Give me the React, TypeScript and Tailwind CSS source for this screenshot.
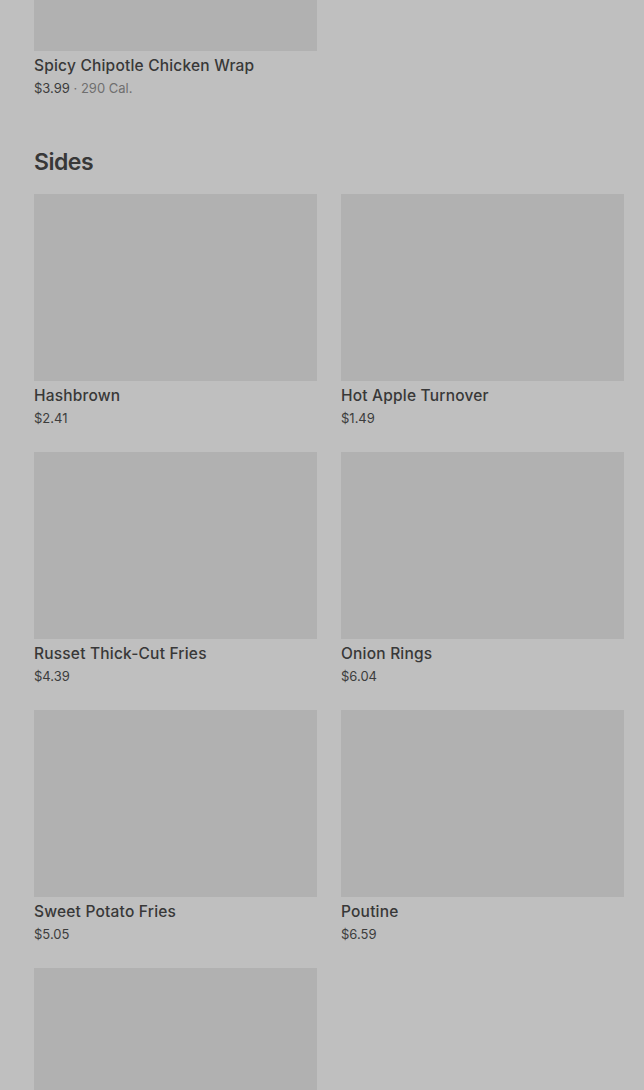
const sides = [
  { name: 'Hashbrown', price: '$2.41' },
  { name: 'Hot Apple Turnover', price: '$1.49' },
  { name: 'Russet Thick-Cut Fries', price: '$4.39' },
  { name: 'Onion Rings', price: '$6.04' },
  { name: 'Sweet Potato Fries', price: '$5.05' },
  { name: 'Poutine', price: '$6.59' },
  { name: '', price: '' },
]

type Item = { name: string; price: string; cal?: string }

function MenuCard({ item, imgClass = 'h-[187px]' }: { item: Item; imgClass?: string }) {
  return (
    <div className="flex flex-col">
      <div className={`w-full bg-[#b1b1b1] ${imgClass}`} />
      {item.name && (
        <>
          <div className="mt-[5px] text-[15.5px] leading-5 font-medium tracking-[0.2px] text-[#383838]">{item.name}</div>
          <div className="mt-[3px] text-[13px] leading-[18px] text-[#3c3c3c]">
            {item.price}
            {item.cal && <span className="text-[#6f6f6f]"> · {item.cal}</span>}
          </div>
        </>
      )}
    </div>
  )
}

export default function App() {
  return (
    <div
      className="h-[1090px] overflow-hidden bg-[#bfbfbf] pl-[34px] pr-[20px]"
      style={{ fontFamily: 'Inter, "Liberation Sans", sans-serif' }}
    >
      {/* previous section, scrolled off the top */}
      <div className="grid grid-cols-2 gap-x-6">
        <MenuCard item={{ name: 'Spicy Chipotle Chicken Wrap', price: '$3.99', cal: '290 Cal.' }} imgClass="h-[51px]" />
      </div>

      <h2 className="mt-[49px] text-[23px] leading-8 font-semibold tracking-[-0.5px] text-[#383838]">Sides</h2>

      <div className="mt-4 grid grid-cols-2 gap-x-6 gap-y-[25px]">
        {sides.map((s, i) => (
          <MenuCard key={i} item={s} />
        ))}
      </div>
    </div>
  )
}
